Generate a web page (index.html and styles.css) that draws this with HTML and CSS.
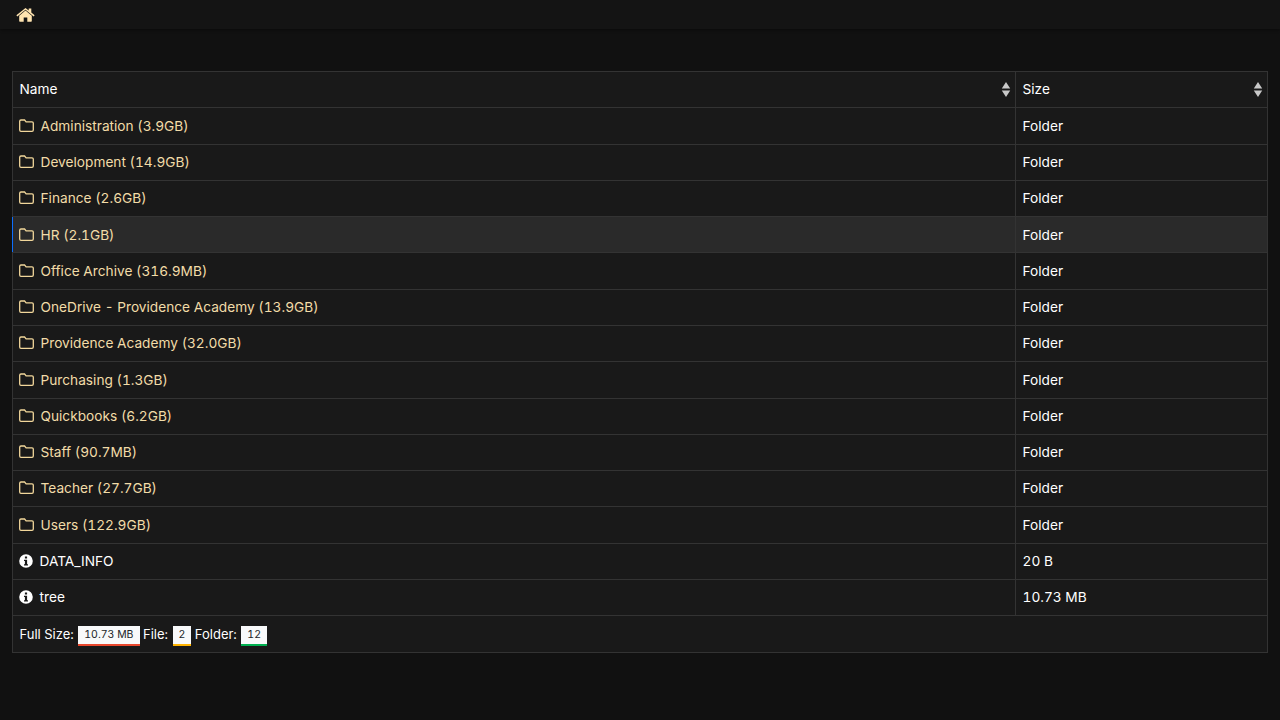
FILE: index.html

```html
<!DOCTYPE html>
<html lang="en">
  <head>
    <meta charset="UTF-8" />
    <meta name="viewport" content="width=device-width, initial-scale=1.0" />
    <title>Index</title>
    <link rel="stylesheet" href="styles.css">
  </head>
  <body>
    <svg class="sprites" width="0" height="0" aria-hidden="true">
      <symbol id="folder" viewBox="0 0 15 13">
        <path d="M2 1h3.6l1.5 1.8h5.9a1.3 1.3 0 0 1 1.3 1.3v6.9a1.3 1.3 0 0 1-1.3 1.3H2A1.3 1.3 0 0 1 .7 11V2.3A1.3 1.3 0 0 1 2 1z" fill="none" stroke="currentColor" stroke-width="1.3" />
      </symbol>
      <symbol id="info" viewBox="0 0 14 14">
        <path fill-rule="evenodd" d="M7 .2a6.8 6.8 0 1 0 0 13.6A6.8 6.8 0 0 0 7 .2zM5.9 2.6h2.2v1.9H5.9zM5 5.8h3.1v4.5H9v1.3H5v-1.3h.9V7.1H5z" fill="currentColor" />
      </symbol>
      <symbol id="sort" viewBox="0 0 10 16">
        <path d="M5 0l4.5 7H.5zM5 16L.5 9h9z" fill="currentColor" />
      </symbol>
    </svg>

    <nav class="topbar">
      <a class="home" href="#" aria-label="Home">
        <svg width="19" height="16" viewBox="0 0 19 16">
          <path d="M9.5 3.6L3.2 8.8V14a.7.7 0 0 0 .7.7h3.8v-4.2h3.6v4.2h3.8a.7.7 0 0 0 .7-.7V8.8z" fill="currentColor" />
          <path d="M.4 8.3L9.5.9l3.2 2.6V1.6h2.6v4l3.3 2.7-.9 1.1-8.2-6.7-8.2 6.7z" fill="currentColor" />
        </svg>
      </a>
    </nav>

    <main class="content">
      <table class="listing">
        <thead>
          <tr>
            <th>Name<svg class="sort"><use href="#sort" /></svg></th>
            <th class="col-size">Size<svg class="sort"><use href="#sort" /></svg></th>
          </tr>
        </thead>
        <tbody>
          <tr><td class="dir"><svg class="ico"><use href="#folder" /></svg>Administration (3.9GB)</td><td>Folder</td></tr>
          <tr><td class="dir"><svg class="ico"><use href="#folder" /></svg>Development (14.9GB)</td><td>Folder</td></tr>
          <tr><td class="dir"><svg class="ico"><use href="#folder" /></svg>Finance (2.6GB)</td><td>Folder</td></tr>
          <tr class="active"><td class="dir"><svg class="ico"><use href="#folder" /></svg>HR (2.1GB)</td><td>Folder</td></tr>
          <tr><td class="dir"><svg class="ico"><use href="#folder" /></svg>Office Archive (316.9MB)</td><td>Folder</td></tr>
          <tr><td class="dir"><svg class="ico"><use href="#folder" /></svg>OneDrive - Providence Academy (13.9GB)</td><td>Folder</td></tr>
          <tr><td class="dir"><svg class="ico"><use href="#folder" /></svg>Providence Academy (32.0GB)</td><td>Folder</td></tr>
          <tr><td class="dir"><svg class="ico"><use href="#folder" /></svg>Purchasing (1.3GB)</td><td>Folder</td></tr>
          <tr><td class="dir"><svg class="ico"><use href="#folder" /></svg>Quickbooks (6.2GB)</td><td>Folder</td></tr>
          <tr><td class="dir"><svg class="ico"><use href="#folder" /></svg>Staff (90.7MB)</td><td>Folder</td></tr>
          <tr><td class="dir"><svg class="ico"><use href="#folder" /></svg>Teacher (27.7GB)</td><td>Folder</td></tr>
          <tr><td class="dir"><svg class="ico"><use href="#folder" /></svg>Users (122.9GB)</td><td>Folder</td></tr>
          <tr><td><svg class="ico info"><use href="#info" /></svg>DATA_INFO</td><td>20 B</td></tr>
          <tr><td><svg class="ico info"><use href="#info" /></svg>tree</td><td>10.73 MB</td></tr>
        </tbody>
        <tfoot>
          <tr>
            <td colspan="2">
              Full Size: <span class="badge red">10.73 MB</span>
              File: <span class="badge yellow">2</span>
              Folder: <span class="badge green">12</span>
            </td>
          </tr>
        </tfoot>
      </table>
    </main>
  </body>
</html>
```

FILE: styles.css

```css
body {
  font-family: Inter, "Noto Sans", Arial, sans-serif;
  font-size: 13.7px;
  font-variant-numeric: tabular-nums;
  line-height: 22.5px;
  background-color: #111111;
  color: #ffffff;
  margin: 0;
}
.sprites {
  position: absolute;
}
.topbar {
  height: 29px;
  padding-left: 16px;
  background-color: #141414;
  box-shadow: 0 1px 3px rgba(0, 0, 0, 0.4);
  display: flex;
  align-items: center;
}
.home {
  display: flex;
  color: #ffe4b0;
}
.content {
  padding: 42px 12px 0;
}
.listing {
  width: 100%;
  border-collapse: collapse;
  table-layout: fixed;
  background-color: #191919;
}
.listing th,
.listing td {
  border: 1px solid #333333;
  padding: 6.4px 6.5px;
  font-weight: normal;
  text-align: left;
}
.listing .col-size {
  width: 252px;
  box-sizing: border-box;
}
.listing th {
  position: relative;
}
.sort {
  position: absolute;
  right: 4px;
  top: 10px;
  width: 10px;
  height: 15px;
  color: #c8c8c8;
}
.ico {
  width: 15px;
  height: 13px;
  margin-right: 7px;
  margin-left: -1px;
  vertical-align: -1px;
  color: #f2d79b;
}
.dir {
  color: #f2dca8;
}
.ico.info {
  width: 14px;
  height: 14px;
  margin-left: -0.5px;
  margin-right: 6.5px;
  vertical-align: -2px;
  color: #ffffff;
}
.active td {
  background-color: #2a2a2a;
}
.listing .active td:first-child {
  border-left-color: #0d6efd;
}
tfoot td {
  font-size: 13px;
}
.badge {
  display: inline-block;
  background-color: #f8f9fa;
  color: #212529;
  font-size: 10.5px;
  line-height: 16px;
  padding: 1px 6px;
  margin: -4px 0 -4px 1px;
  vertical-align: 1px;
  border-bottom: 2px solid;
}
.red {
  border-bottom-color: #e8472d;
}
.yellow {
  border-bottom-color: #ffb300;
}
.green {
  border-bottom-color: #00b050;
}
```
